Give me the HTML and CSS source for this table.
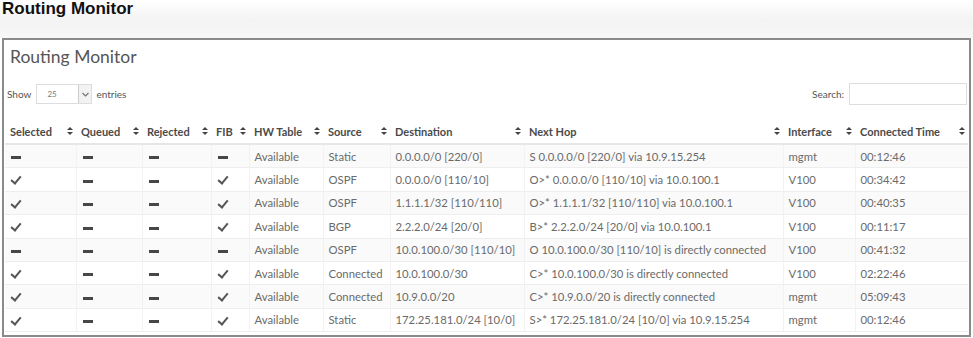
FILE: index.html
```html
<!DOCTYPE html>
<html>
<head>
<meta charset="utf-8">
<link rel="stylesheet" href="styles.css">
</head>
<body>
<div class="topbar"><h1 class="page-title">Routing Monitor</h1></div>
<div class="panel">
  <h2 class="panel-title">Routing Monitor</h2>
  <div class="controls">
    <div class="length">Show <span class="select"><span class="select-val">25</span><span class="select-btn"><svg width="7" height="5" viewBox="0 0 7 5"><path d="M0.5 1 L3.5 4 L6.5 1" fill="none" stroke="#777" stroke-width="1.2"/></svg></span></span> entries</div>
    <div class="search">Search: <span class="search-box"></span></div>
  </div>
  <table class="grid">
    <colgroup>
      <col style="width:71px"><col style="width:66px"><col style="width:69px"><col style="width:38px"><col style="width:74px"><col style="width:67px"><col style="width:134px"><col style="width:259px"><col style="width:72px"><col style="width:113px">
    </colgroup>
    <thead>
      <tr>
        <th><span>Selected</span><i class="sort"></i></th>
        <th><span>Queued</span><i class="sort"></i></th>
        <th><span>Rejected</span><i class="sort"></i></th>
        <th><span>FIB</span><i class="sort"></i></th>
        <th><span>HW Table</span><i class="sort"></i></th>
        <th><span>Source</span><i class="sort"></i></th>
        <th><span>Destination</span><i class="sort"></i></th>
        <th><span>Next Hop</span><i class="sort"></i></th>
        <th><span>Interface</span><i class="sort"></i></th>
        <th><span>Connected Time</span><i class="sort"></i></th>
      </tr>
    </thead>
    <tbody>
      <tr><td><i class="dash"></i></td><td><i class="dash"></i></td><td><i class="dash"></i></td><td><i class="dash"></i></td><td>Available</td><td>Static</td><td>0.0.0.0/0 [220/0]</td><td>S 0.0.0.0/0 [220/0] via 10.9.15.254</td><td>mgmt</td><td>00:12:46</td></tr>
      <tr><td><i class="check"></i></td><td><i class="dash"></i></td><td><i class="dash"></i></td><td><i class="check"></i></td><td>Available</td><td>OSPF</td><td>0.0.0.0/0 [110/10]</td><td>O&gt;* 0.0.0.0/0 [110/10] via 10.0.100.1</td><td>V100</td><td>00:34:42</td></tr>
      <tr><td><i class="check"></i></td><td><i class="dash"></i></td><td><i class="dash"></i></td><td><i class="check"></i></td><td>Available</td><td>OSPF</td><td>1.1.1.1/32 [110/110]</td><td>O&gt;* 1.1.1.1/32 [110/110] via 10.0.100.1</td><td>V100</td><td>00:40:35</td></tr>
      <tr><td><i class="check"></i></td><td><i class="dash"></i></td><td><i class="dash"></i></td><td><i class="check"></i></td><td>Available</td><td>BGP</td><td>2.2.2.0/24 [20/0]</td><td>B&gt;* 2.2.2.0/24 [20/0] via 10.0.100.1</td><td>V100</td><td>00:11:17</td></tr>
      <tr><td><i class="dash"></i></td><td><i class="dash"></i></td><td><i class="dash"></i></td><td><i class="dash"></i></td><td>Available</td><td>OSPF</td><td>10.0.100.0/30 [110/10]</td><td>O 10.0.100.0/30 [110/10] is directly connected</td><td>V100</td><td>00:41:32</td></tr>
      <tr><td><i class="check"></i></td><td><i class="dash"></i></td><td><i class="dash"></i></td><td><i class="check"></i></td><td>Available</td><td>Connected</td><td>10.0.100.0/30</td><td>C&gt;* 10.0.100.0/30 is directly connected</td><td>V100</td><td>02:22:46</td></tr>
      <tr><td><i class="check"></i></td><td><i class="dash"></i></td><td><i class="dash"></i></td><td><i class="check"></i></td><td>Available</td><td>Connected</td><td>10.9.0.0/20</td><td>C&gt;* 10.9.0.0/20 is directly connected</td><td>mgmt</td><td>05:09:43</td></tr>
      <tr><td><i class="check"></i></td><td><i class="dash"></i></td><td><i class="dash"></i></td><td><i class="check"></i></td><td>Available</td><td>Static</td><td>172.25.181.0/24 [10/0]</td><td>S&gt;* 172.25.181.0/24 [10/0] via 10.9.15.254</td><td>mgmt</td><td>00:12:46</td></tr>
    </tbody>
  </table>
</div>
</body>
</html>
```
FILE: styles.css
```css
html, body {
  margin: 0;
  padding: 0;
  background: #fff;
}
body {
  width: 973px;
  height: 338px;
  overflow: hidden;
  font-family: Lato, "Open Sans", sans-serif;
}
.topbar {
  height: 38px;
  background: linear-gradient(to bottom, #ffffff 0%, #f3f3f3 55%, #f7f7f7 100%);
}
.page-title {
  margin: 0;
  padding: 0 0 0 2px;
  font-family: "Liberation Sans", Arial, sans-serif;
  font-weight: bold;
  font-size: 17px;
  line-height: 18px;
  color: #111;
}
.panel {
  margin: 0 2px 0 2px;
  border: 2px solid #8a8a8a;
  height: 299px;
  box-sizing: border-box;
  padding: 0 2px 0 1px;
  background: #fff;
}
.panel-title {
  margin: 0;
  padding: 4px 0 0 5px;
  height: 33px;
  box-sizing: border-box;
  font-weight: normal;
  font-size: 17.5px;
  line-height: 26px;
  color: #555;
}
.controls {
  display: flex;
  justify-content: space-between;
  align-items: center;
  height: 24px;
  margin-top: 9px;
  font-size: 10px;
  color: #555;
}
.length {
  display: flex;
  align-items: center;
  padding-left: 2px;
}
.select {
  display: inline-flex;
  width: 56px;
  height: 20px;
  margin: 0 4px 0 5px;
  border: 1px solid #ddd;
  box-sizing: border-box;
  background: #fff;
}
.select-val {
  flex: 1;
  font-size: 8px;
  line-height: 18px;
  padding-left: 10px;
  color: #777;
}
.select-btn {
  width: 12px;
  border-left: 1px solid #ccc;
  background: #f2f2f2;
  display: flex;
  align-items: center;
  justify-content: center;
}
.search {
  display: flex;
  align-items: center;
}
.search-box {
  display: inline-block;
  width: 118px;
  height: 22px;
  margin-left: 5px;
  border: 1px solid #ddd;
  box-sizing: border-box;
}
.grid {
  margin-top: 13px;
  border-collapse: collapse;
  table-layout: fixed;
  width: 963px;
  font-size: 11.3px;
  color: #6a6a6a;
}
.grid th {
  height: 24px;
  padding: 0 6px 0 5px;
  text-align: left;
  font-weight: bold;
  font-size: 11px;
  color: #4a4a4a;
  border-bottom: 2px solid #e6e6e6;
  white-space: nowrap;
  position: relative;
}
.grid th span {
  display: inline-block;
}
.sort {
  position: absolute;
  right: 6px;
  top: 8px;
  width: 0;
  height: 0;
}
.sort::before, .sort::after {
  content: "";
  position: absolute;
  left: -3px;
  border-left: 3px solid transparent;
  border-right: 3px solid transparent;
}
.sort::before {
  top: 0;
  border-bottom: 3px solid #444;
}
.sort::after {
  top: 5px;
  border-top: 3px solid #444;
}
.grid td {
  height: 22.4px;
  padding: 0 5px;
  border-bottom: 1px solid #eeeeee;
  border-left: 1px solid #f2f2f2;
  white-space: nowrap;
  overflow: hidden;
}
.grid td:first-child {
  border-left: none;
}
.grid tbody tr:nth-child(odd) td {
  background: #fafafa;
}
.dash {
  display: inline-block;
  width: 10px;
  height: 3px;
  background: #474747;
  vertical-align: middle;
  margin-left: 1px;
}
.check {
  display: inline-block;
  width: 4px;
  height: 8px;
  border-right: 2.5px solid #555;
  border-bottom: 2.5px solid #555;
  transform: rotate(40deg);
  margin-left: 3px;
  vertical-align: middle;
  position: relative;
  top: -2px;
}
```
